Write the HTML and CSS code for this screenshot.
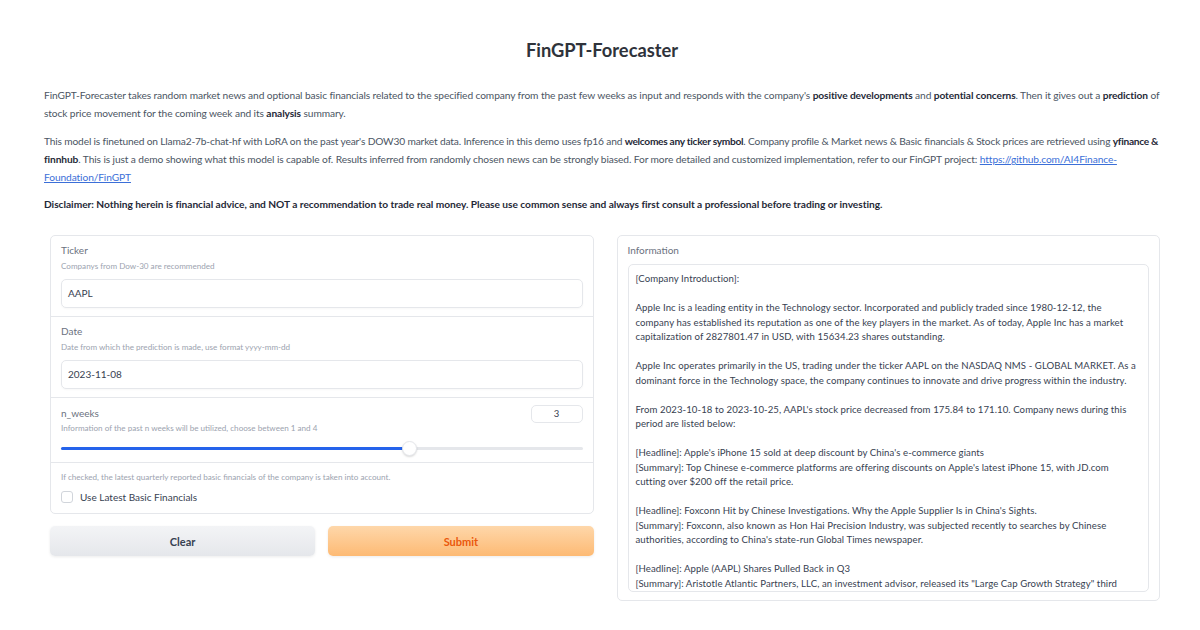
FILE: index.html
```html
<!DOCTYPE html>
<html>
<head>
<meta charset="utf-8">
<link rel="stylesheet" href="styles.css">
</head>
<body>
<main class="app">
  <h1 class="title">FinGPT-Forecaster</h1>
  <p class="desc">FinGPT-Forecaster takes random market news and optional basic financials related to the specified company from the past few weeks as input and responds with the company's <b>positive developments</b> and <b>potential concerns</b>. Then it gives out a <b>prediction</b> of<br>stock price movement for the coming week and its <b>analysis</b> summary.</p>
  <p class="desc"><span class="tight">This model is finetuned on Llama2-7b-chat-hf with LoRA on the past year's DOW30 market data. Inference in this demo uses fp16 and <b>welcomes any ticker symbol</b>. Company profile &amp; Market news &amp; Basic financials &amp; Stock prices are retrieved using <b>yfinance &amp;</b></span><br><b>finnhub</b>. This is just a demo showing what this model is capable of. Results inferred from randomly chosen news can be strongly biased. For more detailed and customized implementation, refer to our FinGPT project: <a href="#">https://github.com/AI4Finance-<br>Foundation/FinGPT</a></p>
  <p class="desc disclaimer">Disclaimer: Nothing herein is financial advice, and NOT a recommendation to trade real money. Please use common sense and always first consult a professional before trading or investing.</p>

  <div class="row">
    <section class="col">
      <div class="panel form">
        <div class="block">
          <div class="label">Ticker</div>
          <div class="hint">Companys from Dow-30 are recommended</div>
          <div class="input">AAPL</div>
        </div>
        <div class="block">
          <div class="label">Date</div>
          <div class="hint">Date from which the prediction is made, use format yyyy-mm-dd</div>
          <div class="input">2023-11-08</div>
        </div>
        <div class="block slider-block">
          <div class="slider-head">
            <div>
              <div class="label">n_weeks</div>
              <div class="hint">Information of the past n weeks will be utilized, choose between 1 and 4</div>
            </div>
            <div class="num">3</div>
          </div>
          <div class="slider">
            <div class="track"><div class="fill" style="width:66.67%"></div></div>
            <div class="thumb" style="left:66.67%"></div>
          </div>
        </div>
        <div class="block check-block">
          <div class="hint">If checked, the latest quarterly reported basic financials of the company is taken into account.</div>
          <label class="check"><span class="box"></span><span>Use Latest Basic Financials</span></label>
        </div>
      </div>
      <div class="buttons">
        <button class="btn clear">Clear</button>
        <button class="btn submit">Submit</button>
      </div>
    </section>
    <section class="col">
      <div class="panel info">
        <div class="label">Information</div>
        <div class="textarea">[Company Introduction]:

Apple Inc is a leading entity in the Technology sector. Incorporated and publicly traded since 1980-12-12, the
company has established its reputation as one of the key players in the market. As of today, Apple Inc has a market
capitalization of 2827801.47 in USD, with 15634.23 shares outstanding.

Apple Inc operates primarily in the US, trading under the ticker AAPL on the NASDAQ NMS - GLOBAL MARKET. As a
dominant force in the Technology space, the company continues to innovate and drive progress within the industry.

From 2023-10-18 to 2023-10-25, AAPL's stock price decreased from 175.84 to 171.10. Company news during this
period are listed below:

[Headline]: Apple's iPhone 15 sold at deep discount by China's e-commerce giants
[Summary]: Top Chinese e-commerce platforms are offering discounts on Apple's latest iPhone 15, with JD.com
cutting over $200 off the retail price.

[Headline]: Foxconn Hit by Chinese Investigations. Why the Apple Supplier Is in China's Sights.
[Summary]: Foxconn, also known as Hon Hai Precision Industry, was subjected recently to searches by Chinese
authorities, according to China's state-run Global Times newspaper.

[Headline]: Apple (AAPL) Shares Pulled Back in Q3
[Summary]: Aristotle Atlantic Partners, LLC, an investment advisor, released its "Large Cap Growth Strategy" third</div>
      </div>
    </section>
  </div>
</main>
</body>
</html>
```

FILE: styles.css
```css
* { box-sizing: border-box; }
html, body { margin: 0; padding: 0; background: #ffffff; }
body {
  font-family: "Lato", "Noto Sans", sans-serif;
  color: #374151;
  width: 1200px;
  height: 630px;
  overflow: hidden;
}
.app {
  padding: 38px 40px 0 44px;
}
.title {
  margin: 0;
  text-align: center;
  font-size: 18.3px;
  line-height: 24px;
  font-weight: 700;
  color: #2f333b;
}
.desc {
  margin: 0;
  font-size: 10.2px;
  line-height: 18px;
  color: #4b5563;
  white-space: nowrap;
  letter-spacing: -0.1px;
}
.desc .tight { letter-spacing: -0.16px; }
.desc:first-of-type { margin-top: 24px; }
.desc + .desc { margin-top: 10px; }
.desc b { color: #1f2937; font-weight: 700; }
.desc .tight b { letter-spacing: -0.3px; }
.desc a { color: #3b6fd8; text-decoration: underline; }
.disclaimer { font-weight: 700; color: #1f2937; margin-top: 9px !important; letter-spacing: -0.04px; }

.row {
  display: flex;
  gap: 23px;
  margin-top: 22px;
  padding-left: 6px;
}
.col { width: 544px; display: flex; flex-direction: column; }
.panel {
  border: 1px solid #e5e7eb;
  border-radius: 5px;
  background: #fff;
}
.form { display: flex; flex-direction: column; }
.block {
  padding: 6px 10px 8px;
  border-bottom: 1px solid #e5e7eb;
}
.block:last-child { border-bottom: none; }
.label {
  font-size: 10px;
  line-height: 16px;
  color: #6b7280;
}
.hint {
  font-size: 8.1px;
  line-height: 16px;
  color: #9ca3af;
}
.input {
  margin-top: 5px;
  height: 29px;
  border: 1px solid #e5e7eb;
  border-radius: 5px;
  font-size: 10px;
  line-height: 27px;
  padding: 0 6px;
  color: #374151;
  box-shadow: 0 1px 2px rgba(0,0,0,0.03);
}
.slider-block { padding-top: 7px; padding-bottom: 0; height: 65px; }
.slider-head { display: flex; justify-content: space-between; align-items: flex-start; }
.slider-head .hint { margin-top: -1px; }
.num {
  width: 52px;
  height: 18px;
  margin-top: 0;
  border: 1px solid #e5e7eb;
  border-radius: 5px;
  font-size: 9.5px;
  line-height: 16px;
  text-align: center;
  color: #374151;
}
.slider { position: relative; height: 14px; margin-top: 6px; }
.track {
  position: absolute; left: 0; right: 0; top: 5px;
  height: 3px; background: #e5e7eb; border-radius: 2px;
}
.fill { height: 3px; background: #2563eb; border-radius: 2px; }
.thumb {
  position: absolute; top: -1px;
  width: 15px; height: 15px;
  margin-left: -7px;
  border-radius: 50%;
  background: #fff;
  border: 1px solid #e5e7eb;
  box-shadow: 0 1px 2px rgba(0,0,0,0.15);
}
.check-block { padding-top: 6px; padding-bottom: 8px; }
.check {
  display: flex; align-items: center; gap: 7px;
  font-size: 10px; line-height: 16px; color: #374151;
  margin-top: 4px;
}
.box {
  width: 12px; height: 12px;
  border: 1px solid #d1d5db; border-radius: 3px; background: #fff;
}
.buttons {
  display: flex; gap: 13px; margin-top: 12px;
}
.btn {
  flex: 1;
  height: 30px;
  border: none;
  border-radius: 5px;
  font-family: inherit;
  font-size: 11px;
  font-weight: 700;
  box-shadow: 0 1px 3px rgba(0,0,0,0.08);
}
.clear {
  background: linear-gradient(180deg, #f3f4f6, #e5e7eb);
  color: #374151;
}
.submit {
  background: linear-gradient(180deg, #fed7aa, #fdba74);
  color: #ea580c;
}
.info {
  height: 366px;
  padding: 6px 10px 8px;
  display: flex; flex-direction: column;
}
.textarea {
  margin-top: 6px;
  flex: 1;
  border: 1px solid #e5e7eb;
  border-radius: 5px;
  padding: 7px 7px 0;
  font-size: 9.6px;
  line-height: 14.5px;
  color: #374151;
  white-space: pre;
  overflow: hidden;
  letter-spacing: 0.08px;
}
```
